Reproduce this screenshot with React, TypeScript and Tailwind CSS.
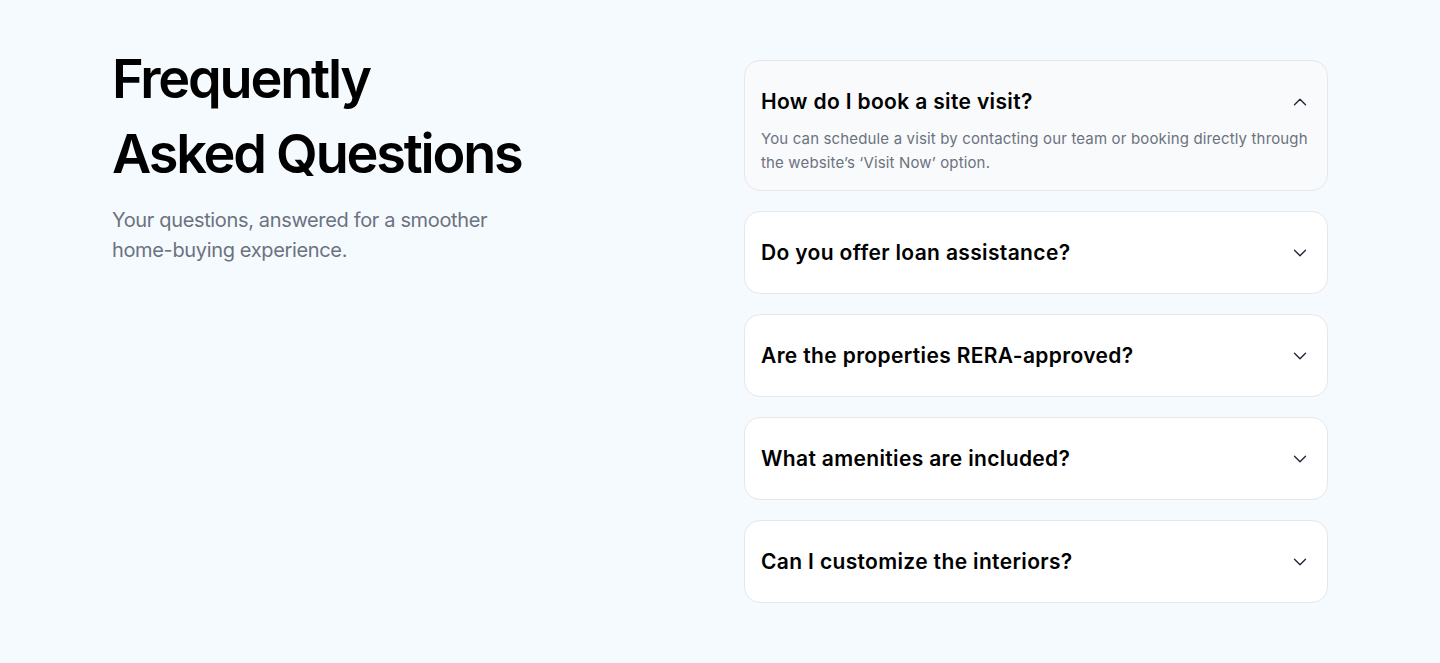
import React, { useState } from "react";
import { ChevronDown, ChevronUp } from "lucide-react";

const faqs = [
  {
    q: "How do I book a site visit?",
    a: "You can schedule a visit by contacting our team or booking directly through the website\u2019s \u2018Visit Now\u2019 option.",
  },
  {
    q: "Do you offer loan assistance?",
    a: "Yes, we partner with leading banks and financial institutions to help you secure a home loan quickly.",
  },
  {
    q: "Are the properties RERA-approved?",
    a: "All our projects are registered and approved under RERA for complete transparency.",
  },
  {
    q: "What amenities are included?",
    a: "Amenities vary by project and include clubhouses, gyms, pools, landscaped gardens and more.",
  },
  {
    q: "Can I customize the interiors?",
    a: "Select projects offer interior customization options. Please speak with our team for details.",
  },
];

export default function App() {
  const [open, setOpen] = useState<number | null>(0);

  return (
    <div
      className="min-h-screen w-full bg-[#f5faff] text-black"
      style={{ fontFamily: "Inter, 'Noto Sans', sans-serif" }}
    >
      <section className="mx-auto grid max-w-[1216px] grid-cols-2 gap-12 pt-[41px] pb-[60px]">
        {/* ========== LEFT: HEADING ========== */}
        <div>
          <h2 className="text-[54px] font-semibold leading-[75px] tracking-[-2.2px] text-black">
            Frequently
            <br />
            Asked Questions
          </h2>
          <p className="mt-[14px] max-w-[400px] text-[20px] leading-[30px] tracking-[-0.35px] text-[#6b7280]">
            Your questions, answered for a smoother home-buying experience.
          </p>
        </div>

        {/* ========== RIGHT: ACCORDION ========== */}
        <div className="flex flex-col gap-5 pt-[19px]">
          {faqs.map((item, i) => {
            const isOpen = open === i;
            return (
              <div
                key={i}
                className={`rounded-2xl border border-[#e5e7eb] px-4 ${
                  isOpen ? "bg-[#f9fafb]" : "bg-white"
                }`}
              >
                <button
                  onClick={() => setOpen(isOpen ? null : i)}
                  className="flex w-full items-center justify-between py-6 text-left"
                >
                  <span className="text-[21px] font-semibold leading-[33px] tracking-[0.35px] text-black">
                    {item.q}
                  </span>
                  {isOpen ? (
                    <ChevronUp size={22} strokeWidth={1.5} className="text-[#1f2937]" />
                  ) : (
                    <ChevronDown size={22} strokeWidth={1.5} className="text-[#1f2937]" />
                  )}
                </button>
                {isOpen && (
                  <p className="-mr-2 -mt-[15px] pb-[15px] text-[15px] leading-6 tracking-[0.15px] text-[#6b7280]">
                    {item.a}
                  </p>
                )}
              </div>
            );
          })}
        </div>
      </section>
    </div>
  );
}
